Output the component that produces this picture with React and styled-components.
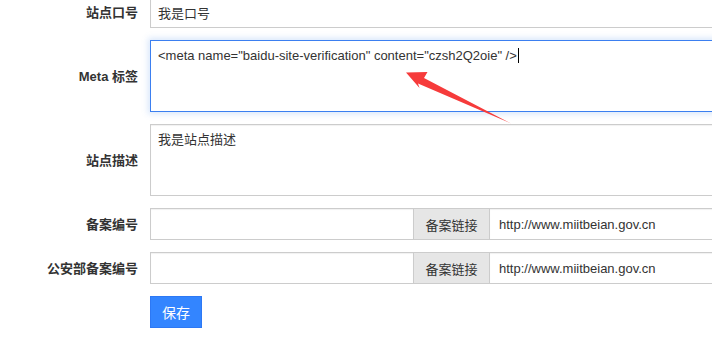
import React from "react";
import styled, { createGlobalStyle, css } from "styled-components";

const GlobalStyle = createGlobalStyle`
	html, body {
		margin: 0;
		padding: 0;
		background: #fff;
		overflow: hidden;
	}
	body {
		font-family: "Liberation Sans", "Noto Sans CJK SC", sans-serif;
		font-size: 13px;
		color: #333;
	}
`;

const Page = styled.div`
	position: relative;
	width: 712px;
	height: 337px;
	overflow: hidden;
`;

const Form = styled.form`
	display: flex;
	flex-direction: column;
	gap: 12px;
	margin-top: -4px;
	width: 900px;
`;

const Row = styled.div`
	display: grid;
	grid-template-columns: 150px 600px;
	align-items: center;
`;

const Label = styled.label`
	font-weight: bold;
	font-size: 13px;
	color: #333;
	text-align: right;
	padding-right: 12px;
	white-space: nowrap;
	margin-top: -1px;
`;

const boxBase = css`
	box-sizing: border-box;
	border: 1px solid #ccc;
	background: #fff;
	font-family: "Liberation Sans", "Noto Sans CJK SC", sans-serif;
	font-size: 13px;
	color: #333;
	outline: none;
	box-shadow: inset 0 1px 1px rgba(0, 0, 0, 0.06);
`;

const Input = styled.input`
	${boxBase};
	height: 32px;
	padding: 0 ${(p) => p.$pad || "7px"};
	width: ${(p) => p.$width || "100%"};
	flex: ${(p) => (p.$width ? "none" : "1")};
	min-width: 0;
`;

const Area = styled.div`
	${boxBase};
	height: 72px;
	padding: 6px 7px;
	line-height: 18px;
	white-space: pre;

	${(p) =>
		p.$focus &&
		css`
			border-color: #3b7ff0;
			box-shadow: 0 0 6px 2px rgba(102, 160, 240, 0.25);
		`}
`;

const Caret = styled.span`
	display: inline-block;
	width: 1px;
	height: 15px;
	background: #000;
	vertical-align: -3px;
	margin-left: 1px;
`;

const Group = styled.div`
	display: flex;
	align-items: stretch;
	height: 32px;
`;

const Addon = styled.span`
	display: flex;
	align-items: center;
	justify-content: center;
	box-sizing: border-box;
	width: 77px;
	margin: 0 -1px;
	position: relative;
	z-index: 1;
	background: #e6e6e6;
	border: 1px solid #ccc;
	color: #333;
	font-size: 13px;
`;

const SaveButton = styled.button`
	box-sizing: border-box;
	width: 52px;
	height: 32px;
	padding: 0;
	background: #3385ff;
	border: 1px solid #2d78f4;
	color: #fff;
	font-family: "Liberation Sans", "Noto Sans CJK SC", sans-serif;
	font-size: 14px;
	cursor: pointer;
`;

const Arrow = styled.svg`
	position: absolute;
	left: 0;
	top: 0;
	pointer-events: none;
`;

export default function App() {
	return (
		<Page>
			<GlobalStyle />
			<Form onSubmit={(e) => e.preventDefault()}>
				<Row>
					<Label>站点口号</Label>
					<Input readOnly defaultValue="我是口号" />
				</Row>
				<Row>
					<Label>Meta 标签</Label>
					<Area $focus>
						{'<meta name="baidu-site-verification" content="czsh2Q2oie" />'}
						<Caret />
					</Area>
				</Row>
				<Row>
					<Label>站点描述</Label>
					<Area>我是站点描述</Area>
				</Row>
				<Row>
					<Label>备案编号</Label>
					<Group>
						<Input readOnly $width="264px" />
						<Addon>备案链接</Addon>
						<Input readOnly $pad="9px" defaultValue="http://www.miitbeian.gov.cn" />
					</Group>
				</Row>
				<Row>
					<Label>公安部备案编号</Label>
					<Group>
						<Input readOnly $width="264px" />
						<Addon>备案链接</Addon>
						<Input readOnly $pad="9px" defaultValue="http://www.miitbeian.gov.cn" />
					</Group>
				</Row>
				<Row>
					<span />
					<div>
						<SaveButton type="submit">保存</SaveButton>
					</div>
				</Row>
			</Form>
			<Arrow width="712" height="337" viewBox="0 0 712 337">
				<polygon
					points="406,72.5 427.5,72 424,78 511,123.5 418,83.5 419.5,88"
					fill="#f63b3b"
				/>
			</Arrow>
		</Page>
	);
}
